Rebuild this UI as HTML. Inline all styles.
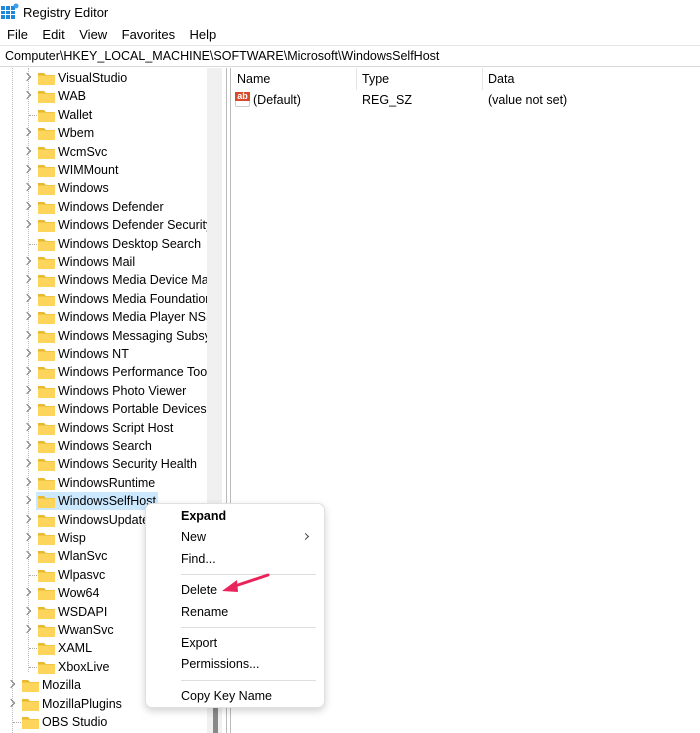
<!DOCTYPE html>
<html><head><style>
*{margin:0;padding:0;box-sizing:border-box}
body{width:700px;height:733px;background:#fff;font-family:"Liberation Sans",sans-serif;font-size:12.5px;color:#000;position:relative;overflow:hidden}
.a{position:absolute;white-space:nowrap}
.row{position:absolute;height:18px;line-height:18px;white-space:nowrap}
.fold{position:absolute;width:17px;height:13px;top:3px}
.chev{position:absolute;top:5px;width:6px;height:6px;border-right:1px solid #777;border-top:1px solid #777;transform:rotate(45deg)}
.dot{position:absolute;border-top:1px dotted #aaa;width:8px;top:9px}
.mi{position:absolute;left:181px;font-size:12.5px}
.sep{position:absolute;left:181px;width:135px;height:1px;background:#ddd}
</style></head><body>
<svg class="a" style="left:1px;top:3px" width="18" height="17" viewBox="0 0 18 17">
<rect x="0" y="3" width="14" height="13" fill="#1e88d8"/>
<g stroke="#fff" stroke-width="1"><line x1="0" y1="7.5" x2="14" y2="7.5"/><line x1="0" y1="11.5" x2="14" y2="11.5"/><line x1="4.5" y1="3" x2="4.5" y2="16"/><line x1="9.5" y1="3" x2="9.5" y2="16"/></g>
<circle cx="15" cy="3" r="2.5" fill="#3aa0ee"/></svg>
<div class="a" style="left:23px;top:5px;font-size:13px">Registry Editor</div>
<div class="a" style="left:7px;top:27px;font-size:13px;word-spacing:0">File&nbsp;&nbsp;&nbsp;&nbsp;Edit&nbsp;&nbsp;&nbsp;&nbsp;View&nbsp;&nbsp;&nbsp;&nbsp;Favorites&nbsp;&nbsp;&nbsp;&nbsp;Help</div>
<div class="a" style="left:0;top:45px;width:700px;height:22px;border-top:1px solid #e5e5e5;border-bottom:1px solid #d9d9d9"></div>
<div class="a" style="left:5px;top:49px;font-size:12.5px">Computer\HKEY_LOCAL_MACHINE\SOFTWARE\Microsoft\WindowsSelfHost</div>

<div class="a" style="left:0;top:68px;width:207px;height:665px;overflow:hidden" id="tree">
<div class="a" style="left:12px;top:0;height:665px;border-left:1px dotted #bbb"></div>
<div class="a" style="left:36px;top:424px;width:122px;height:18px;background:#cce8ff"></div>
</div>
<div class="a" style="left:207px;top:68px;width:15px;height:665px;background:#f0f0f0"></div>
<div class="a" style="left:213px;top:706px;width:5px;height:27px;background:#888"></div>
<div class="a" style="left:226px;top:68px;width:1px;height:665px;background:#bbb"></div>
<div class="a" style="left:230px;top:68px;width:1px;height:665px;background:#bbb"></div>

<div class="a" style="left:237px;top:72px">Name</div>
<div class="a" style="left:356px;top:68px;width:1px;height:22px;background:#e5e5e5"></div>
<div class="a" style="left:362px;top:72px">Type</div>
<div class="a" style="left:482px;top:68px;width:1px;height:22px;background:#e5e5e5"></div>
<div class="a" style="left:488px;top:72px">Data</div>
<div class="a" style="left:235px;top:93px;width:15px;height:14px;background:#fff;border:1px solid #ccc;border-radius:2px"></div>
<div class="a" style="left:235px;top:92px;width:15px;height:9px;background:#d84a2a;color:#fff;font-size:9px;font-weight:bold;line-height:9px;text-align:center">ab</div>
<div class="a" style="left:253px;top:93px">(Default)</div>
<div class="a" style="left:362px;top:93px">REG_SZ</div>
<div class="a" style="left:488px;top:93px">(value not set)</div>

<div class="a" style="left:145px;top:503px;width:180px;height:205px;background:#fff;border:1px solid #e0e0e0;border-radius:7px;box-shadow:0 3px 8px rgba(0,0,0,.18)"></div>
<div class="mi" style="top:509px;font-weight:bold">Expand</div>
<div class="mi" style="top:530px">New</div>
<div class="a" style="left:303px;top:534px;width:5px;height:5px;border-right:1px solid #444;border-top:1px solid #444;transform:rotate(45deg)"></div>
<div class="mi" style="top:552px">Find...</div>
<div class="sep" style="top:574px"></div>
<div class="mi" style="top:583px">Delete</div>
<div class="mi" style="top:605px">Rename</div>
<div class="sep" style="top:627px"></div>
<div class="mi" style="top:636px">Export</div>
<div class="mi" style="top:657px">Permissions...</div>
<div class="sep" style="top:680px"></div>
<div class="mi" style="top:689px">Copy Key Name</div>
<svg class="a" style="left:218px;top:570px" width="55" height="30" viewBox="0 0 55 30">
<path d="M50 5 L17 16" stroke="#e8245a" stroke-width="3" stroke-linecap="round"/>
<path d="M4 21 L19 10 L20 22 Z" fill="#e8245a"/></svg>

<script>
var items=[["VisualStudio",1],["WAB",1],["Wallet",0],["Wbem",1],["WcmSvc",1],["WIMMount",1],["Windows",1],["Windows Defender",1],["Windows Defender Security Center",1],["Windows Desktop Search",0],["Windows Mail",1],["Windows Media Device Manager",1],["Windows Media Foundation",1],["Windows Media Player NSS",1],["Windows Messaging Subsystem",1],["Windows NT",1],["Windows Performance Toolkit",1],["Windows Photo Viewer",1],["Windows Portable Devices",1],["Windows Script Host",1],["Windows Search",1],["Windows Security Health",1],["WindowsRuntime",1],["WindowsSelfHost",1],["WindowsUpdate",1],["Wisp",1],["WlanSvc",1],["Wlpasvc",0],["Wow64",1],["WSDAPI",1],["WwanSvc",1],["XAML",0],["XboxLive",0],["Mozilla",1,1],["MozillaPlugins",1,1],["OBS Studio",0,1]];
var t=document.getElementById('tree'),h='';
items.forEach(function(it,i){
var y=i*18.4+1,top=it[2],cx=top?11:27,fx=top?22:38,tx=top?42:58;
h+='<div class="row" style="left:0;top:'+y+'px;width:300px">';
if(it[1])h+='<div class="chev" style="left:'+(cx-3)+'px"></div>';
else h+='<div class="dot" style="left:'+(top?13:29)+'px"></div>';
h+='<svg class="fold" style="left:'+fx+'px" viewBox="0 0 17 13"><path d="M0 1 h6 l2 2 h9 v10 h-17z" fill="#e8b830"/><rect x="0" y="3.5" width="17" height="9.5" fill="#fcd55a"/></svg>';
h+='<span style="position:absolute;left:'+tx+'px">'+it[0]+'</span></div>';});
t.insertAdjacentHTML('beforeend',h);
var ch=document.createElement('div');ch.className='a';ch.style.cssText='left:28px;top:0;height:604px;border-left:1px dotted #bbb';t.insertBefore(ch,t.firstChild);
</script>
</body></html>
